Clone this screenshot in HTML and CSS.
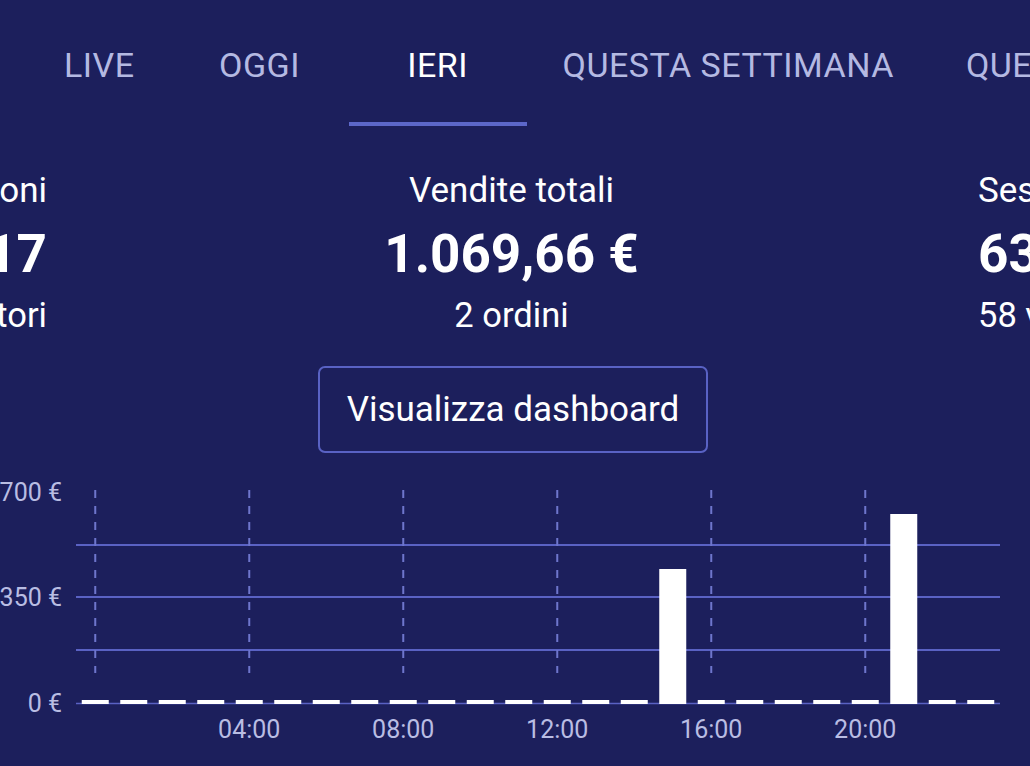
FILE: index.html
```html
<!DOCTYPE html>
<html lang="it">
<head>
<meta charset="utf-8">
<link rel="stylesheet" href="styles.css">
</head>
<body>
<div class="screen">
  <nav class="tabs">
    <div class="tab">LIVE</div>
    <div class="tab tab-wide">OGGI</div>
    <div class="tab tab-wide active">IERI</div>
    <div class="tab">QUESTA SETTIMANA</div>
    <div class="tab">QUESTO MESE</div>
  </nav>

  <section class="stats">
    <div class="stat stat-left">
      <div class="stat-label">Sessioni</div>
      <div class="stat-value">117</div>
      <div class="stat-sub">60 visitatori</div>
    </div>
    <div class="stat stat-center">
      <div class="stat-label">Vendite totali</div>
      <div class="stat-value">1.069,66 €</div>
      <div class="stat-sub">2 ordini</div>
    </div>
    <div class="stat stat-right">
      <div class="stat-label">Sessioni</div>
      <div class="stat-value">63</div>
      <div class="stat-sub">58 visitatori</div>
    </div>
  </section>

  <div class="actions">
    <button class="dash-btn">Visualizza dashboard</button>
  </div>

  <svg class="chart" width="1030" height="296" viewBox="0 0 1030 296">
    <g class="hgrid">
      <line x1="76" y1="75" x2="1000" y2="75"/>
      <line x1="76" y1="127" x2="1000" y2="127"/>
      <line x1="76" y1="180" x2="1000" y2="180"/>
      <line class="base" x1="76" y1="233.5" x2="1000" y2="233.5"/>
    </g>
    <g class="vgrid">
      <line x1="95.25" y1="20" x2="95.25" y2="203"/>
      <line x1="249.25" y1="20" x2="249.25" y2="203"/>
      <line x1="403.25" y1="20" x2="403.25" y2="203"/>
      <line x1="557.25" y1="20" x2="557.25" y2="203"/>
      <line x1="711.25" y1="20" x2="711.25" y2="203"/>
      <line x1="865.25" y1="20" x2="865.25" y2="203"/>
    </g>
    <g class="bars">
      <rect x="81.75" y="230" width="27" height="4"/>
      <rect x="120.25" y="230" width="27" height="4"/>
      <rect x="158.75" y="230" width="27" height="4"/>
      <rect x="197.25" y="230" width="27" height="4"/>
      <rect x="235.75" y="230" width="27" height="4"/>
      <rect x="274.25" y="230" width="27" height="4"/>
      <rect x="312.75" y="230" width="27" height="4"/>
      <rect x="351.25" y="230" width="27" height="4"/>
      <rect x="389.75" y="230" width="27" height="4"/>
      <rect x="428.25" y="230" width="27" height="4"/>
      <rect x="466.75" y="230" width="27" height="4"/>
      <rect x="505.25" y="230" width="27" height="4"/>
      <rect x="543.75" y="230" width="27" height="4"/>
      <rect x="582.25" y="230" width="27" height="4"/>
      <rect x="620.75" y="230" width="27" height="4"/>
      <rect x="659.25" y="99" width="27" height="135"/>
      <rect x="697.75" y="230" width="27" height="4"/>
      <rect x="736.25" y="230" width="27" height="4"/>
      <rect x="774.75" y="230" width="27" height="4"/>
      <rect x="813.25" y="230" width="27" height="4"/>
      <rect x="851.75" y="230" width="27" height="4"/>
      <rect x="890.25" y="44" width="27" height="190"/>
      <rect x="928.75" y="230" width="27" height="4"/>
      <rect x="967.25" y="230" width="27" height="4"/>
    </g>
    <g class="ylabels">
      <text x="62" y="31">700 €</text>
      <text x="62" y="136">350 €</text>
      <text x="62" y="242">0 €</text>
    </g>
    <g class="xlabels">
      <text x="249.25" y="268">04:00</text>
      <text x="403.25" y="268">08:00</text>
      <text x="557.25" y="268">12:00</text>
      <text x="711.25" y="268">16:00</text>
      <text x="865.25" y="268">20:00</text>
    </g>
  </svg>
</div>
</body>
</html>
```

FILE: styles.css
```css
html, body {
  margin: 0;
  padding: 0;
  background: #1c1f5c;
}
body {
  width: 1030px;
  height: 766px;
  overflow: hidden;
  font-family: Roboto, "Liberation Sans", sans-serif;
  color: #ffffff;
}
.screen {
  width: 1030px;
  height: 766px;
  overflow: hidden;
  display: flex;
  flex-direction: column;
}

/* Tabs */
.tabs {
  display: flex;
  padding-left: 28px;
  height: 126px;
  white-space: nowrap;
  flex: none;
}
.tab {
  box-sizing: border-box;
  height: 126px;
  padding: 45px 36px 0;
  line-height: 40px;
  font-size: 34px;
  letter-spacing: 0.5px;
  color: #b4b9e2;
  text-align: center;
  flex: none;
}
.tab-wide {
  min-width: 178px;
}
.tab.active {
  color: #ffffff;
  border-bottom: 4px solid #5c67c9;
}

/* Stats */
.stats {
  display: grid;
  grid-template-columns: 47px 1fr 52px;
  margin-top: 47px;
  white-space: nowrap;
  flex: none;
}
.stat {
  display: flex;
  flex-direction: column;
  min-width: 0;
}
.stat-left {
  align-items: flex-end;
}
.stat-center {
  align-items: center;
  padding-right: 2px;
}
.stat-right {
  align-items: flex-start;
}
.stat-label {
  font-size: 35px;
  line-height: 36px;
}
.stat-value {
  font-size: 53px;
  font-weight: 700;
  line-height: 90px;
}
.stat-sub {
  font-size: 34.5px;
  line-height: 32px;
}

/* Button */
.actions {
  display: flex;
  justify-content: center;
  margin-top: 35px;
  padding-right: 4px;
  flex: none;
}
.dash-btn {
  font-family: Roboto, "Liberation Sans", sans-serif;
  font-size: 35px;
  line-height: 36px;
  color: #ffffff;
  background: transparent;
  border: 2px solid #5962c4;
  border-radius: 7px;
  padding: 24px 20px 23px;
  width: 390px;
}

/* Chart */
.chart {
  display: block;
  margin-top: 17px;
  flex: none;
}
.hgrid line {
  stroke: #5a62c4;
  stroke-width: 2;
}
.hgrid line.base {
  stroke-width: 1.5;
}
.vgrid line {
  stroke: #6e76cc;
  stroke-width: 2;
  stroke-dasharray: 8 8;
}
.bars rect {
  fill: #ffffff;
}
.ylabels text {
  fill: #b9bde3;
  font-family: Roboto, "Liberation Sans", sans-serif;
  font-size: 25px;
  text-anchor: end;
}
.xlabels text {
  fill: #b9bde3;
  font-family: Roboto, "Liberation Sans", sans-serif;
  font-size: 25px;
  text-anchor: middle;
}
```
